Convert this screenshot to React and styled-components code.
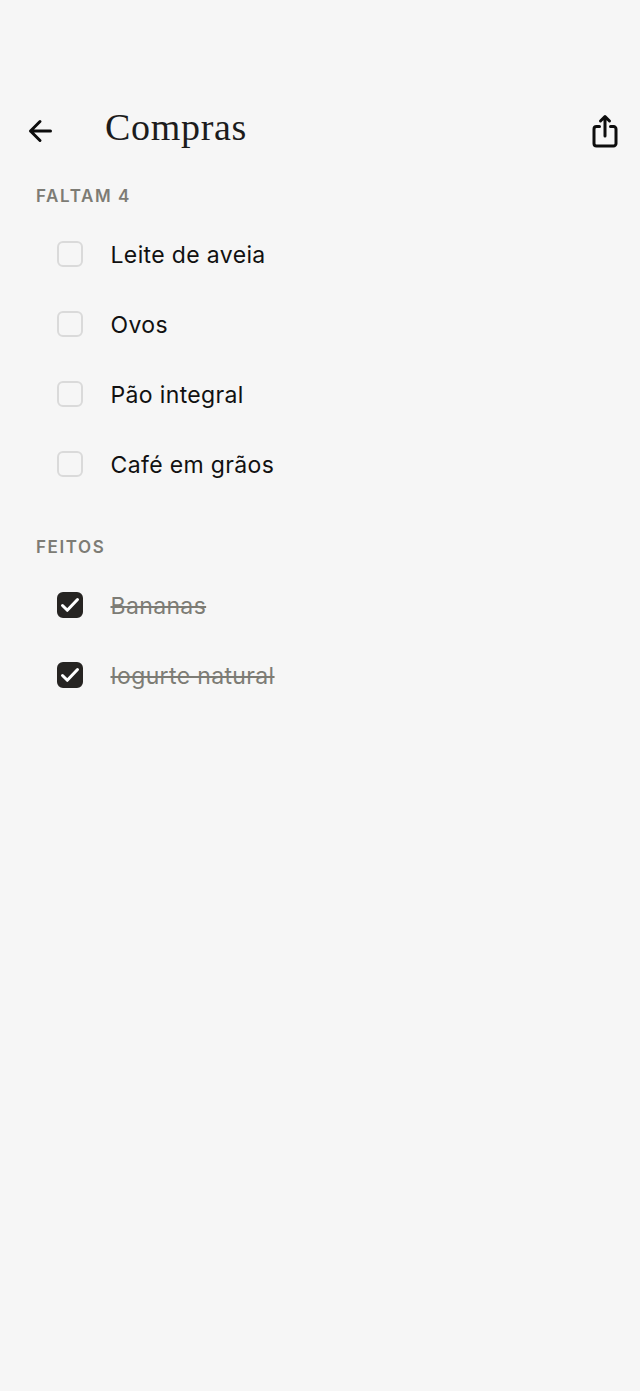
import React from 'react';
import styled, { createGlobalStyle } from 'styled-components';

const GlobalStyle = createGlobalStyle`
  html, body {
    margin: 0;
    padding: 0;
    background: #f6f6f6;
  }
`;

const Page = styled.div`
  width: 640px;
  height: 1391px;
  overflow: hidden;
  background: #f6f6f6;
  font-family: Inter, "Liberation Sans", sans-serif;
  color: #111;
`;

const Header = styled.header`
  display: flex;
  align-items: center;
  height: 56px;
  margin-top: 102px;
  padding: 0 18px 0 24px;
`;

const IconButton = styled.button`
  display: flex;
  align-items: center;
  justify-content: center;
  width: 34px;
  height: 40px;
  padding: 0;
  border: none;
  background: none;
  color: #0d0d0d;
`;

const Title = styled.h1`
  flex: 1;
  margin: -6px 0 0 47px;
  font-family: "Liberation Serif", serif;
  font-size: 38px;
  font-weight: 400;
  letter-spacing: 0.7px;
  color: #1c1c1c;
`;

const SectionLabel = styled.h2`
  margin: ${(p) => p.$top}px 0 0 36px;
  height: 24px;
  line-height: 24px;
  font-size: 17px;
  font-weight: 600;
  letter-spacing: 1.6px;
  color: #7d7c75;
`;

const List = styled.ul`
  list-style: none;
  margin: 12px 0 0;
  padding: 0;
`;

const Row = styled.li`
  display: flex;
  align-items: center;
  gap: 28px;
  height: 70px;
  padding-left: 57px;
`;

const Box = styled.span`
  display: flex;
  align-items: center;
  justify-content: center;
  box-sizing: border-box;
  width: 26px;
  height: 26px;
  margin-bottom: 2px;
  border-radius: 6px;
  border: 2px solid ${(p) => (p.$done ? '#262422' : '#dadada')};
  background: ${(p) => (p.$done ? '#262422' : 'transparent')};
`;

const ItemText = styled.span`
  margin-left: -0.5px;
  font-size: 23px;
  font-weight: 400;
  line-height: 30px;
  letter-spacing: 0.36px;
  color: ${(p) => (p.$done ? '#7d7c75' : '#111')};
  text-decoration: ${(p) => (p.$done ? 'line-through' : 'none')};
`;

const pending = ['Leite de aveia', 'Ovos', 'Pão integral', 'Café em grãos'];
const done = ['Bananas', 'Iogurte natural'];

function Item({ label, checked }) {
  return (
    <Row>
      <Box $done={checked}>
        {checked && (
          <svg width="22" height="22" viewBox="0 0 22 22" fill="none" stroke="#fff" strokeWidth="3" strokeLinecap="round" strokeLinejoin="round">
            <path d="M3.5 11.5l4.8 4.8L18.5 5.5" />
          </svg>
        )}
      </Box>
      <ItemText $done={checked}>{label}</ItemText>
    </Row>
  );
}

export default function App() {
  return (
    <Page>
      <GlobalStyle />
      <Header>
        <IconButton aria-label="Voltar">
          <svg width="28" height="28" viewBox="0 0 28 28" fill="none" stroke="currentColor" strokeWidth="3" strokeLinecap="round" strokeLinejoin="round">
            <path d="M23.5 15H3.5M13 5.5L3.5 15l9.5 9.5" />
          </svg>
        </IconButton>
        <Title>Compras</Title>
        <IconButton aria-label="Partilhar">
          <svg width="30" height="36" viewBox="0 0 30 36" fill="none" stroke="currentColor" strokeWidth="3" strokeLinecap="round" strokeLinejoin="round">
            <path d="M15 24V4.5M10.5 9L15 4.5 19.500 9" />
            <path d="M9.5 14.5H6.5A2.5 2.5 0 0 0 4 17V31.5A2.5 2.5 0 0 0 6.5 34h17A2.5 2.5 0 0 0 26 31.5V17A2.5 2.5 0 0 0 23.5 14.5H20.5" />
          </svg>
        </IconButton>
      </Header>
      <SectionLabel $top={26}>FALTAM 4</SectionLabel>
      <List>
        {pending.map((label) => <Item key={label} label={label} />)}
      </List>
      <SectionLabel $top={35}>FEITOS</SectionLabel>
      <List>
        {done.map((label) => <Item key={label} label={label} checked />)}
      </List>
    </Page>
  );
}
